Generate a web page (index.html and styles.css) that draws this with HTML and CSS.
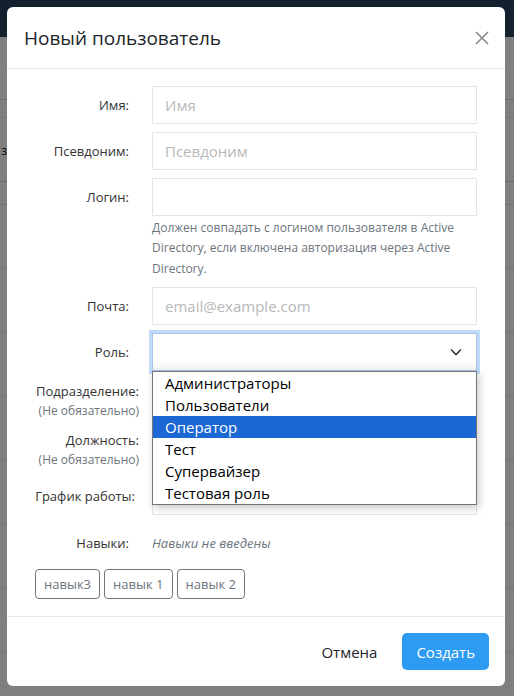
FILE: index.html
```html
<!DOCTYPE html>
<html lang="ru">
<head>
  <meta charset="UTF-8">
  <title>Пользователи</title>
  <link rel="stylesheet" href="styles.css">
</head>
<body>

<div class="page">
  <header class="navbar"></header>
  <div class="toolbar"></div>
  <div class="subbar"></div>
  <div class="filters">
    <span class="filter-tail">з</span>
  </div>
  <div class="table-head"></div>
  <div class="table-row"></div>
  <div class="table-row"></div>
  <div class="table-row"></div>
  <div class="table-row"></div>
  <div class="table-row"></div>
  <div class="table-row"></div>
  <div class="table-row">
    <div class="cell cell-first"></div>
    <div class="cell cell-name">
      <span>Петров Иван</span>
      <span>(не указано)</span>
    </div>
    <div class="cell"></div>
  </div>
</div>

<div class="backdrop"></div>

<!-- New user dialog -->
<div class="modal">
  <div class="modal-header">
    <h5 class="modal-title">Новый пользователь</h5>
    <button class="close" type="button" aria-label="Закрыть">
      <svg width="14" height="14" viewBox="0 0 14 14">
        <path d="M1 1 L13 13 M13 1 L1 13" stroke="#888" stroke-width="1.6" fill="none"/>
      </svg>
    </button>
  </div>

  <div class="modal-body">
    <div class="form-row">
      <label class="form-label">Имя:</label>
      <div class="form-field"><input class="form-control" placeholder="Имя"></div>
    </div>

    <div class="form-row">
      <label class="form-label">Псевдоним:</label>
      <div class="form-field"><input class="form-control" placeholder="Псевдоним"></div>
    </div>

    <div class="form-row">
      <label class="form-label">Логин:</label>
      <div class="form-field">
        <input class="form-control">
        <p class="help">Должен совпадать с логином пользователя в Active Directory, если включена авторизация через Active Directory.</p>
      </div>
    </div>

    <div class="form-row">
      <label class="form-label">Почта:</label>
      <div class="form-field"><input class="form-control" placeholder="email@example.com"></div>
    </div>

    <div class="form-row">
      <label class="form-label">Роль:</label>
      <div class="form-field">
        <div class="select is-open">
          <svg class="chevron" width="12" height="8" viewBox="0 0 12 8">
            <path d="M1 1.5 L6 6.5 L11 1.5" stroke="#343a40" stroke-width="1.6" fill="none"/>
          </svg>
        </div>
        <ul class="select-menu">
          <li>Администраторы</li>
          <li>Пользователи</li>
          <li class="active">Оператор</li>
          <li>Тест</li>
          <li>Супервайзер</li>
          <li>Тестовая роль</li>
        </ul>
      </div>
    </div>

    <div class="form-row">
      <label class="form-label optional">Подразделение:<span class="hint">(Не обязательно)</span></label>
      <div class="form-field"><input class="form-control"></div>
    </div>

    <div class="form-row">
      <label class="form-label optional">Должность:<span class="hint">(Не обязательно)</span></label>
      <div class="form-field"><input class="form-control"></div>
    </div>

    <div class="form-row">
      <label class="form-label form-label-wide">График работы:</label>
      <div class="form-field"><input class="form-control"></div>
    </div>

    <div class="form-row skills-row">
      <label class="form-label">Навыки:</label>
      <div class="form-field"><span class="empty">Навыки не введены</span></div>
    </div>

    <div class="chips">
      <button class="chip" type="button">навык3</button>
      <button class="chip" type="button">навык 1</button>
      <button class="chip" type="button">навык 2</button>
    </div>
  </div>

  <div class="modal-footer">
    <button class="btn btn-link" type="button">Отмена</button>
    <button class="btn btn-primary" type="button">Создать</button>
  </div>
</div>

</body>
</html>
```

FILE: styles.css
```css
body {
  margin: 0;
  font-family: "Open Sans", "Noto Sans", sans-serif;
  color: #212529;
  overflow: hidden;
}

/* Page behind the dialog */
.page {
  height: 696px;
  overflow: hidden;
  background: #fff;
}
.navbar {
  height: 37px;
  background: #2a405c;
}
.toolbar {
  height: 62px;
  border-bottom: 1px solid #d6d6d6;
}
.subbar {
  height: 17px;
  border-bottom: 1px solid #ececec;
}
.filters {
  height: 63px;
  border-bottom: 1px solid #cfcfcf;
  display: flex;
  align-items: center;
}
.filter-tail {
  padding-left: 1px;
  font-size: 13px;
  color: #222;
}
.table-head {
  height: 22px;
  border-bottom: 1px solid #e6e6e6;
}
.table-row {
  height: 63px;
  border-bottom: 1px solid #efefef;
  display: flex;
}
.cell {
  border-left: 1px solid #e2e2e2;
  flex: 1;
}
.cell-first {
  flex: 0 0 97px;
  border-left: 0;
}
.cell-name {
  flex: 0 0 246px;
  padding: 19px 0 0 17px;
  display: flex;
  flex-direction: column;
  font-size: 15px;
  line-height: 19px;
  color: #222;
}

.backdrop {
  position: fixed;
  inset: 0;
  background: rgba(0, 0, 0, 0.5);
}

/* Dialog */
.modal {
  position: absolute;
  top: 7px;
  left: 7px;
  width: 498px;
  background: #fff;
  border-radius: 6px;
}
.modal-header {
  display: flex;
  align-items: center;
  justify-content: space-between;
  padding: 16px 16px 15px 17px;
  border-bottom: 1px solid #e6e6e6;
}
.modal-title {
  margin: 0;
  font-size: 19px;
  font-weight: 500;
  line-height: 30px;
}
.close {
  border: 0;
  background: none;
  padding: 0;
  width: 14px;
  height: 14px;
  cursor: pointer;
}
.close svg {
  display: block;
}

.modal-body {
  padding: 17px 28px 17px;
}

.form-row {
  display: flex;
  align-items: flex-start;
  margin-bottom: 8px;
}
.form-label {
  box-sizing: border-box;
  width: 104px;
  min-height: 38px;
  padding-right: 10px;
  display: flex;
  flex-direction: column;
  justify-content: center;
  align-items: flex-end;
  font-size: 13px;
  color: #333;
}
.form-label.optional {
  justify-content: flex-start;
  padding: 2px 0 0;
  line-height: 21px;
}
.form-label-wide {
  padding-right: 4px;
}
.hint {
  font-size: 12px;
  line-height: 18px;
  color: #6c757d;
}
.form-field {
  width: 325px;
  margin-left: 13px;
  position: relative;
}
.form-control {
  display: block;
  box-sizing: border-box;
  width: 100%;
  height: 38px;
  padding: 0 12px;
  border: 1px solid #e3e3e3;
  border-radius: 1px;
  font-family: inherit;
  font-size: 15px;
  color: #212529;
  outline: none;
}
.form-control::placeholder {
  color: #b8b8b8;
}
.help {
  margin: 2px 0 0;
  font-size: 12px;
  line-height: 20.4px;
  color: #6c757d;
}

/* Role select, shown open */
.select {
  box-sizing: border-box;
  height: 38px;
  border: 1px solid #a8c6ec;
  box-shadow: 0 0 0 3px #c2dafa;
  background: linear-gradient(#fff 70%, #f6f6f6);
  display: flex;
  align-items: center;
  justify-content: flex-end;
  padding-right: 14px;
}
.select-menu {
  position: absolute;
  top: 100%;
  left: 0;
  right: 0;
  z-index: 2;
  margin: 0;
  padding: 0;
  list-style: none;
  background: #fff;
  border: 1px solid #767676;
  box-shadow: 2px 3px 8px rgba(0, 0, 0, 0.22);
}
.select-menu li {
  height: 22px;
  line-height: 22px;
  padding-left: 12px;
  font-size: 15px;
  color: #000;
}
.select-menu li.active {
  background: #1b67d3;
  color: #fff;
}

.skills-row {
  padding-top: 3px;
  margin-bottom: 9px;
}
.skills-row .form-label {
  min-height: 34px;
}
.skills-row .form-field {
  display: flex;
  align-items: center;
  height: 34px;
}
.empty {
  font-size: 13px;
  font-style: italic;
  color: #6c757d;
}

.chips {
  display: flex;
  gap: 4px;
}
.chip {
  height: 30px;
  padding: 0 8px;
  border: 1px solid #6c757d;
  border-radius: 4px;
  background: #fff;
  font-family: inherit;
  font-size: 13px;
  color: #6c757d;
}

.modal-footer {
  display: flex;
  justify-content: flex-end;
  gap: 13px;
  padding: 16px;
  border-top: 1px solid #e6e6e6;
}
.btn {
  height: 37px;
  border: 0;
  border-radius: 5px;
  font-family: inherit;
  font-size: 15px;
  cursor: pointer;
}
.btn-link {
  padding: 0 12px;
  background: none;
  color: #212529;
}
.btn-primary {
  padding: 0 14px;
  background: #2d9bf2;
  color: #fff;
}
```
